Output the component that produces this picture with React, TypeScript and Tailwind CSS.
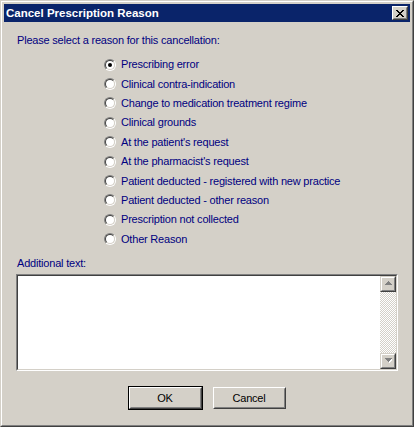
import React from "react";

const reasons = [
  "Prescribing error",
  "Clinical contra-indication",
  "Change to medication treatment regime",
  "Clinical grounds",
  "At the patient's request",
  "At the pharmacist's request",
  "Patient deducted - registered with new practice",
  "Patient deducted - other reason",
  "Prescription not collected",
  "Other Reason",
];

function Radio({ checked }: { checked?: boolean }) {
  return (
    <div className="w-[12px] h-[12px] rounded-full border border-t-[#808080] border-l-[#808080] border-r-white border-b-white shrink-0">
      <div className="w-full h-full rounded-full border border-t-[#404040] border-l-[#404040] border-r-[#d4d0c8] border-b-[#d4d0c8] bg-white flex items-center justify-center">
        {checked && <div className="w-[4px] h-[4px] rounded-full bg-black" />}
      </div>
    </div>
  );
}

function ScrollBtn({ down }: { down?: boolean }) {
  return (
    <div className="w-[16px] h-[16px] bg-[#d4d0c8] border border-t-[#d4d0c8] border-l-[#d4d0c8] border-r-[#404040] border-b-[#404040]">
      <div className="w-full h-full border border-t-white border-l-white border-r-[#808080] border-b-[#808080] flex items-center justify-center">
        <svg width="7" height="5" viewBox="0 0 7 5" shapeRendering="crispEdges">
          {down ? (
            <>
              <path d="M1 1h7v1h-1v1h-1v1h-1v1h-1v-1h-1v-1h-1v-1h-1z" fill="#ffffff" />
              <path d="M0 0h7v1h-1v1h-1v1h-1v1h-1v-1h-1v-1h-1v-1h-1z" fill="#808080" />
            </>
          ) : (
            <path d="M3 0h1v1h1v1h1v1h1v1h-7v-1h1v-1h1v-1h1z" fill="#808080" />
          )}
        </svg>
      </div>
    </div>
  );
}

function Button({ label, isDefault }: { label: string; isDefault?: boolean }) {
  return (
    <div
      className={
        "w-[75px] h-[24px] " +
        (isDefault ? "border border-black" : "border border-transparent")
      }
    >
      <div className="w-full h-full bg-[#d4d0c8] border border-t-white border-l-white border-r-[#404040] border-b-[#404040]">
        <div className="w-full h-full border border-t-[#d4d0c8] border-l-[#d4d0c8] border-r-[#808080] border-b-[#808080] flex items-center justify-center text-black text-[11px] tracking-[-0.2px]">
          {label}
        </div>
      </div>
    </div>
  );
}

export default function App() {
  return (
    <div
      className="w-[414px] h-[427px] bg-[#d4d0c8] border border-t-[#d4d0c8] border-l-[#d4d0c8] border-r-[#404040] border-b-[#404040]"
      style={{ fontFamily: '"Liberation Sans", Arial, sans-serif' }}
    >
      <div className="w-full h-full border border-t-white border-l-white border-r-[#808080] border-b-[#808080] p-[2px] flex flex-col">
        {/* Title bar */}
        <div className="h-[18px] bg-[#0a246a] flex items-center justify-between pl-[2px] pr-[2px]">
          <span className="text-white font-bold text-[11.5px] leading-[18px]">
            Cancel Prescription Reason
          </span>
          <div className="w-[16px] h-[14px] bg-[#d4d0c8] border border-t-white border-l-white border-r-[#404040] border-b-[#404040]">
            <div className="w-full h-full border border-t-[#d4d0c8] border-l-[#d4d0c8] border-r-[#808080] border-b-[#808080] flex items-center justify-center">
              <svg width="8" height="7" viewBox="0 0 8 7" shapeRendering="crispEdges">
                <path
                  d="M0 0h2v1h1v1h2v-1h1v-1h2v1h-1v1h-1v1h-1v1h1v1h1v1h1v1h-2v-1h-1v-1h-2v1h-1v1h-2v-1h1v-1h1v-1h1v-1h-1v-1h-1v-1h-1z"
                  fill="#000"
                />
              </svg>
            </div>
          </div>
        </div>

        {/* Body */}
        <div className="flex-1 flex flex-col px-[12px] text-[11px] tracking-[-0.2px] text-[#000080]">
          <div className="mt-[12px] h-[13px] leading-[13px] pl-[1px]">
            Please select a reason for this cancellation:
          </div>
          <div className="mt-[8px] flex flex-col pl-[88px]">
            {reasons.map((r, i) => (
              <div key={r} className="h-[19.4px] flex items-center gap-[5px]">
                <Radio checked={i === 0} />
                <span className="leading-[13px]">{r}</span>
              </div>
            ))}
          </div>
          <div className="mt-[8px] h-[13px] leading-[13px] pl-[1px]">Additional text:</div>
          <div className="mt-[4px] h-[97px] border border-t-[#808080] border-l-[#808080] border-r-white border-b-white">
            <div className="w-full h-full border border-t-[#404040] border-l-[#404040] border-r-[#d4d0c8] border-b-[#d4d0c8] bg-white flex justify-end">
              <div className="w-[16px] h-full flex flex-col bg-[conic-gradient(#d4d0c8_25%,#ffffff_0_50%,#d4d0c8_0_75%,#ffffff_0)] bg-size-[2px_2px]">
                <ScrollBtn />
                <div className="flex-1" />
                <ScrollBtn down />
              </div>
            </div>
          </div>
          <div className="mt-[15px] flex justify-center gap-[9px]">
            <Button label="OK" isDefault />
            <Button label="Cancel" />
          </div>
        </div>
      </div>
    </div>
  );
}
